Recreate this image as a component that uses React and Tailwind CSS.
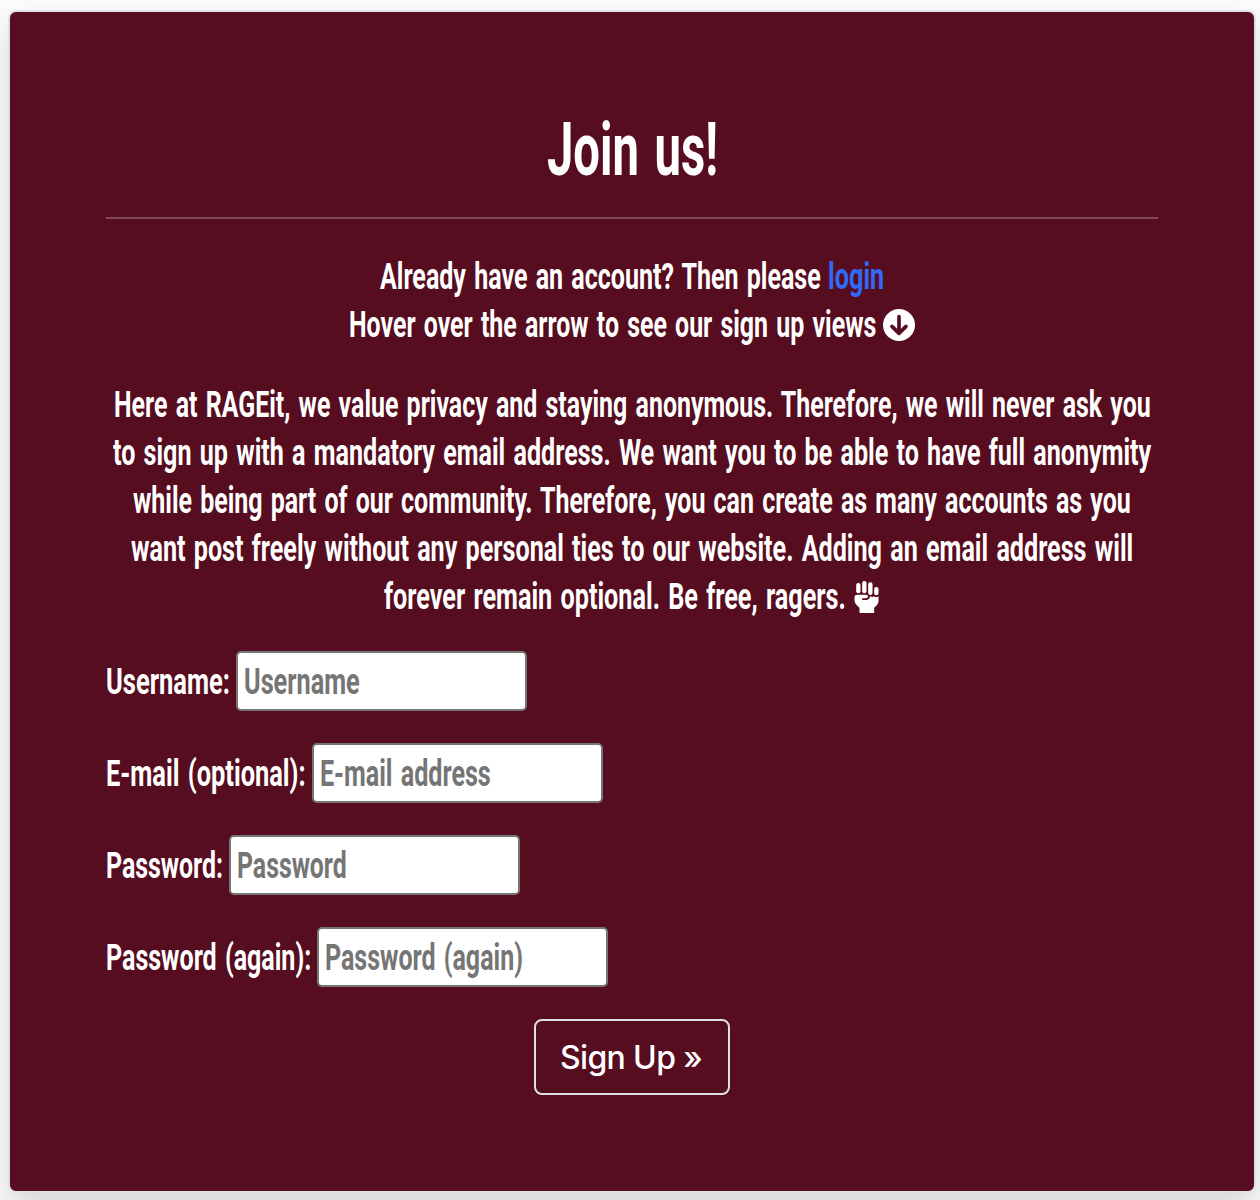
import { useLayoutEffect, useRef, useState } from "react";

// Condensed text: squeezes a line of text to the given width.
function Condensed({ width, children, className = "" }) {
  const ref = useRef(null);
  const [scale, setScale] = useState(0.7);
  useLayoutEffect(() => {
    const fit = () => setScale(width / ref.current.offsetWidth);
    fit();
    document.fonts?.ready.then(fit);
  }, [width, children]);
  return (
    <span className="inline-block shrink-0" style={{ width }}>
      <span
        ref={ref}
        className={"inline-block origin-left whitespace-nowrap [word-spacing:0.08em] " + className}
        style={{ transform: `scaleX(${scale})` }}
      >
        {children}
      </span>
    </span>
  );
}

function ArrowDownCircle() {
  return (
    <svg viewBox="0 0 96 96" className="size-8" aria-hidden="true">
      <circle cx="48" cy="48" r="48" fill="currentColor" />
      <path
        d="M48 23V71M27 52L48 73L69 52"
        fill="none"
        stroke="#560d1f"
        strokeWidth="11"
        strokeLinecap="round"
        strokeLinejoin="round"
      />
    </svg>
  );
}

function Fist() {
  return (
    <svg viewBox="0 0 74 96" className="h-8 w-[25px]" fill="currentColor" aria-hidden="true">
      <rect x="6" y="6" width="13" height="31" rx="6" />
      <rect x="24" y="0" width="13" height="37" rx="6" />
      <rect x="42" y="4" width="13" height="38" rx="6" />
      <rect x="60" y="18" width="13" height="25" rx="6" />
      <path d="M9 41H34Q42 41 42 46.500Q42 52 34 52H24V57H35Q46 57 48 46Q55 50 60 46Q66 52 73 46V60Q73 70 60 80V96H16V80Q1 69 1 58V49Q1 41 9 41Z" />
    </svg>
  );
}

const pledge = [
  ["Here at RAGEit, we value privacy and staying anonymous. Therefore, we will never ask you", 1037],
  ["to sign up with a mandatory email address. We want you to be able to have full anonymity", 1038],
  ["while being part of our community. Therefore, you can create as many accounts as you", 998],
  ["want post freely without any personal ties to our website. Adding an email address will", 1002],
];

const fields = [
  ["Username:", 124, "Username", 116, "text"],
  ["E-mail (optional):", 200, "E-mail address", 171, "email"],
  ["Password:", 117, "Password", 110, "password"],
  ["Password (again):", 205, "Password (again)", 198, "password"],
];

function Field({ label, labelWidth, placeholder, placeholderWidth, type }) {
  const [value, setValue] = useState("");
  return (
    <label className="flex h-[60px] items-center gap-[6px]">
      <span className="pt-[2px]">
        <Condensed width={labelWidth}>{label}</Condensed>
      </span>
      <span className="relative block h-[60px] w-[291px] rounded-[5px] border-2 border-[#767676] bg-white">
        <input
          type={type}
          value={value}
          onChange={(e) => setValue(e.target.value)}
          aria-label={placeholder}
          className="absolute inset-0 bg-transparent px-1 text-black outline-none"
        />
        {!value && (
          <span className="pointer-events-none flex h-full items-center pt-[2px] pl-[6px] text-[#757575]">
            <Condensed width={placeholderWidth}>{placeholder}</Condensed>
          </span>
        )}
      </span>
    </label>
  );
}

export default function App() {
  return (
    <div className="flex h-[1200px] flex-col overflow-hidden bg-[#fcfcfc] pt-[10px] pr-1 pl-2">
      <main className="h-[1183px] rounded-[8px] border-2 border-[#dee2e6] bg-[#560d1f] px-24 pt-24 font-['Roboto',sans-serif] text-[37px] leading-[48px] font-bold text-white shadow-[0_16px_32px_rgba(0,0,0,0.15)]">
        <h1 className="flex h-[77px] justify-center pt-[3px] text-[74px] leading-[77px]">
          <Condensed width={171}>Join us!</Condensed>
        </h1>
        <hr className="mt-8 border-t-2 border-white/25" />
        <div className="pt-8">
          <p className="flex h-12 items-center justify-center gap-[7px] pt-[3px]">
            <Condensed width={441}>Already have an account? Then please</Condensed>
            <a href="#login" className="text-[#306af8]">
              <Condensed width={56}>login</Condensed>
            </a>
          </p>
          <p className="flex h-12 items-center justify-center gap-[7px] pt-[3px]">
            <Condensed width={527}>Hover over the arrow to see our sign up views</Condensed>
            <ArrowDownCircle />
          </p>
        </div>
        <div className="pt-8">
          {pledge.map(([line, width]) => (
            <p key={line} className="flex h-12 items-center justify-center pt-[3px]">
              <Condensed width={width}>{line}</Condensed>
            </p>
          ))}
          <p className="flex h-12 items-center justify-center gap-2 pt-[3px] pr-[2px]">
            <Condensed width={462}>forever remain optional. Be free, ragers.</Condensed>
            <Fist />
          </p>
        </div>
        <form className="mt-8 flex flex-col gap-8" onSubmit={(e) => e.preventDefault()}>
          {fields.map(([label, labelWidth, placeholder, placeholderWidth, type]) => (
            <Field key={label} {...{ label, labelWidth, placeholder, placeholderWidth, type }} />
          ))}
          <button className="h-[76px] w-[196px] self-center rounded-[8px] border-2 border-[#dee2e6] pt-[2px] pr-[2px] font-['Inter',sans-serif] text-[32px] font-[450] tracking-[-0.02em]">
            Sign Up »
          </button>
        </form>
      </main>
    </div>
  );
}
